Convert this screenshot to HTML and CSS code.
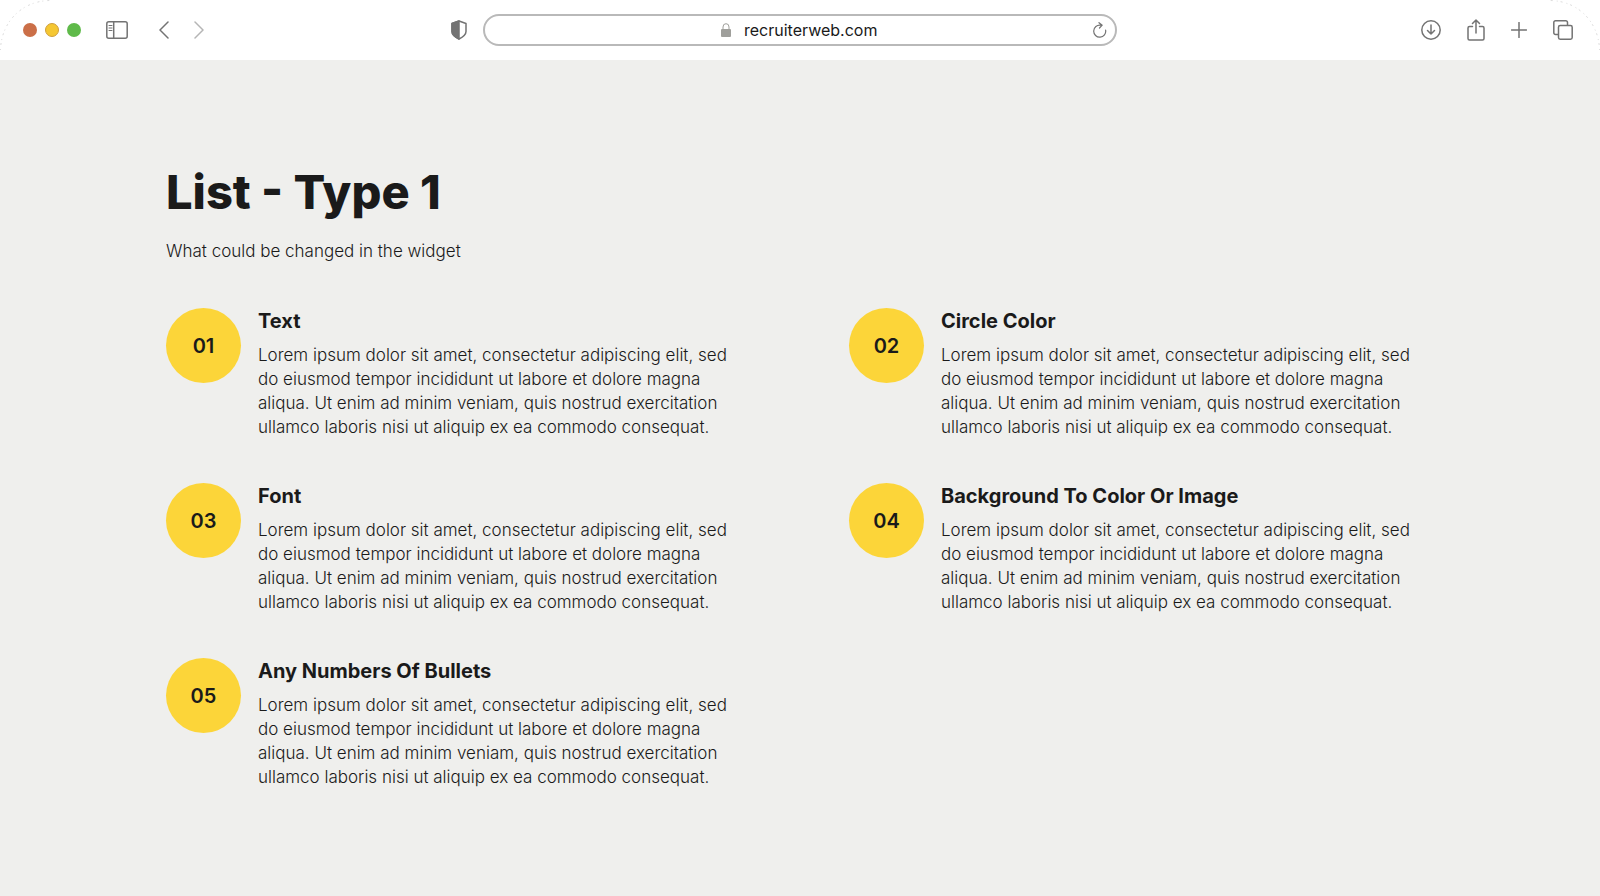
FILE: index.html
```
<!DOCTYPE html>
<html lang="en">
<head>
    <meta charset="UTF-8">
    <title>List - Type 1</title>
    <meta name="viewport" content="width=device-width,initial-scale=1">
    <link rel="stylesheet" href="styles.css">
</head>
<body>

    <header class="toolbar">
        <svg class="corner corner_left" width="50" height="50" viewBox="0 0 50 50"><path d="M.5 50C1 24 20 1 50 .5"/></svg>
        <svg class="corner corner_right" width="50" height="50" viewBox="0 0 50 50"><path d="M49.500 50C49 24 30 1 0 .5"/></svg>

        <div class="tools tools_left">
            <div class="lights">
                <span class="light red"></span>
                <span class="light yellow"></span>
                <span class="light green"></span>
            </div>
            <button class="tool sidebar" type="button" aria-label="Sidebar">
                <svg width="22" height="18" viewBox="0 0 22 18"><rect x=".8" y=".8" width="20.400" height="16.400" rx="2"/><path d="M7.700 1v16"/><path class="thin" d="M3 4.500h3M3 7h3M3 9.500h3"/></svg>
            </button>
            <div class="arrows">
                <button class="tool" type="button" aria-label="Back">
                    <svg width="10" height="18" viewBox="0 0 10 18"><path d="M9 1L1 9l8 8"/></svg>
                </button>
                <button class="tool faded" type="button" aria-label="Forward">
                    <svg width="10" height="18" viewBox="0 0 10 18"><path d="M1 1l8 8-8 8"/></svg>
                </button>
            </div>
            <button class="tool shield" type="button" aria-label="Privacy report">
                <svg width="16" height="20" viewBox="0 0 16 20"><path d="M8 1l7 2.500v8c0 3-3 5.500-7 7.500-4-2-7-4.500-7-7.500v-8z"/><path class="solid" d="M8 1v18c-4-2-7-4.500-7-7.500v-8z"/></svg>
            </button>
        </div>

        <form class="address">
            <svg class="lock" width="12" height="14" viewBox="0 0 12 14"><path d="M3 7V4a3 3.300 0 0 1 6 0v3"/><rect x="1" y="6" width="10" height="8" rx="1"/></svg>
            <input class="url" type="text" value="recruiterweb.com" aria-label="Address">
            <button class="tool reload" type="button" aria-label="Reload">
                <svg width="14" height="16" viewBox="0 0 14 16"><path d="M12.600 8a6 6 0 1 1-5-4.800H9M6 .7l3.200 2.500L6.500 6"/></svg>
            </button>
        </form>

        <div class="tools tools_right">
            <button class="tool" type="button" aria-label="Downloads">
                <svg width="20" height="20" viewBox="0 0 20 20"><circle cx="10" cy="10" r="9.200"/><path d="M10 5v9M6.500 10.500L10 14l3.500-3.500"/></svg>
            </button>
            <button class="tool" type="button" aria-label="Share">
                <svg width="18" height="22" viewBox="0 0 18 22"><path d="M5.500 7.500H2.500A1.500 1.500 0 0 0 1 9v10.500A1.500 1.500 0 0 0 2.500 21h13a1.500 1.500 0 0 0 1.500-1.500V9a1.500 1.500 0 0 0-1.500-1.500H12.500M9 14V1M5.500 4.500L9 1l3.500 3.500"/></svg>
            </button>
            <button class="tool" type="button" aria-label="New tab">
                <svg width="16" height="16" viewBox="0 0 16 16"><path d="M8 .5v15M.5 8h15"/></svg>
            </button>
            <button class="tool" type="button" aria-label="Tabs">
                <svg width="20" height="20" viewBox="0 0 20 20"><path d="M5 14.500H2.500A1.700 1.700 0 0 1 .8 12.800V2.500A1.700 1.700 0 0 1 2.500.8h10.300a1.700 1.700 0 0 1 1.700 1.700V5"/><rect x="5.500" y="5.500" width="13.700" height="13.700" rx="1.700"/></svg>
            </button>
        </div>
    </header>

    <main class="content">
        <h1 class="title">List - Type 1</h1>
        <p class="intro">What could be changed in the widget</p>

        <div class="list">
            <div class="item">
                <div class="number">01</div>
                <div class="text">
                    <h2>Text</h2>
                    <p>Lorem ipsum dolor sit amet, consectetur adipiscing elit, sed do eiusmod tempor incididunt ut labore et dolore magna aliqua. Ut enim ad minim veniam, quis nostrud exercitation ullamco laboris nisi ut aliquip ex ea commodo consequat.</p>
                </div>
            </div>
            <div class="item">
                <div class="number">02</div>
                <div class="text">
                    <h2>Circle Color</h2>
                    <p>Lorem ipsum dolor sit amet, consectetur adipiscing elit, sed do eiusmod tempor incididunt ut labore et dolore magna aliqua. Ut enim ad minim veniam, quis nostrud exercitation ullamco laboris nisi ut aliquip ex ea commodo consequat.</p>
                </div>
            </div>
            <div class="item">
                <div class="number">03</div>
                <div class="text">
                    <h2>Font</h2>
                    <p>Lorem ipsum dolor sit amet, consectetur adipiscing elit, sed do eiusmod tempor incididunt ut labore et dolore magna aliqua. Ut enim ad minim veniam, quis nostrud exercitation ullamco laboris nisi ut aliquip ex ea commodo consequat.</p>
                </div>
            </div>
            <div class="item">
                <div class="number">04</div>
                <div class="text">
                    <h2>Background To Color Or Image</h2>
                    <p>Lorem ipsum dolor sit amet, consectetur adipiscing elit, sed do eiusmod tempor incididunt ut labore et dolore magna aliqua. Ut enim ad minim veniam, quis nostrud exercitation ullamco laboris nisi ut aliquip ex ea commodo consequat.</p>
                </div>
            </div>
            <div class="item">
                <div class="number">05</div>
                <div class="text">
                    <h2>Any Numbers Of Bullets</h2>
                    <p>Lorem ipsum dolor sit amet, consectetur adipiscing elit, sed do eiusmod tempor incididunt ut labore et dolore magna aliqua. Ut enim ad minim veniam, quis nostrud exercitation ullamco laboris nisi ut aliquip ex ea commodo consequat.</p>
                </div>
            </div>
        </div>
    </main>

</body>
</html>
```
FILE: styles.css
```
*{
    box-sizing:border-box;
}
body{
    margin:0;
    background:#efefed;
    color:#1a1a1a;
    font-family:Inter, sans-serif;
    font-size:17px;
    font-weight:300;
    line-height:24px;
}
h1,h2,p{
    margin:0;
}

/* browser bar */
.toolbar{
    position:relative;
    display:grid;
    grid-template-columns:1fr minmax(0,634px) 1fr;
    align-items:center;
    height:60px;
    background:#fff;
}
.corner{
    position:absolute;
    top:0;
    fill:none;
    stroke:#ddd;
    stroke-dasharray:1 4 2 3;
}
.corner_left{
    left:0;
}
.corner_right{
    right:0;
}
.tools{
    display:flex;
    align-items:center;
}
.tools_left{
    padding:0 16px 0 23px;
}
.tools_right{
    justify-content:flex-end;
    gap:26px;
    padding-right:27px;
}
.lights{
    display:flex;
    gap:8px;
}
.light{
    width:14px;
    height:14px;
    border-radius:50%;
}
.red{
    background:#cb6f48;
}
.yellow{
    background:#f5c732;
    border:1px solid #cf9f3c;
}
.green{
    background:#5fba4a;
}
.tool{
    display:flex;
    padding:0;
    border:0;
    background:none;
    color:#737373;
}
.tool svg{
    fill:none;
    stroke:currentColor;
    stroke-width:1.5;
    stroke-linecap:round;
    stroke-linejoin:round;
}
.tool .thin{
    stroke-width:1;
}
.tool .solid{
    fill:currentColor;
}
.faded{
    color:#b5b5b5;
}
.sidebar{
    margin-left:25px;
}
.arrows{
    display:flex;
    gap:25px;
    margin-left:31px;
}
.shield{
    margin-left:auto;
}
.address{
    position:relative;
    display:flex;
    align-items:center;
    justify-content:center;
    gap:12px;
    height:32px;
    margin:0;
    border:2px solid #b9b9b9;
    border-radius:16px;
}
.lock{
    fill:#9f9f9b;
}
.lock path{
    fill:none;
    stroke:#9f9f9b;
}
.url{
    width:136px;
    padding:0;
    border:0;
    outline:0;
    background:none;
    color:#1a1a1a;
    font:400 16px/24px Inter, sans-serif;
}
.reload{
    position:absolute;
    right:8px;
}
.reload svg{
    stroke-width:1.2;
}

/* widget */
.content{
    padding:104px 166px;
}
.title{
    font-size:47px;
    font-weight:800;
    line-height:56px;
}
.intro{
    margin-top:19px;
}
.list{
    display:grid;
    grid-template-columns:1fr 1fr;
    gap:44px 98px;
    margin-top:45px;
}
.item{
    display:flex;
    gap:17px;
}
.number{
    flex:none;
    width:75px;
    height:75px;
    border-radius:50%;
    background:#fcd539;
    font-size:20px;
    font-weight:600;
    line-height:76px;
    text-align:center;
}
.text{
    max-width:480px;
    padding-top:1px;
}
.text h2{
    margin-bottom:10px;
    font-size:20px;
    font-weight:700;
    line-height:24px;
}
```
